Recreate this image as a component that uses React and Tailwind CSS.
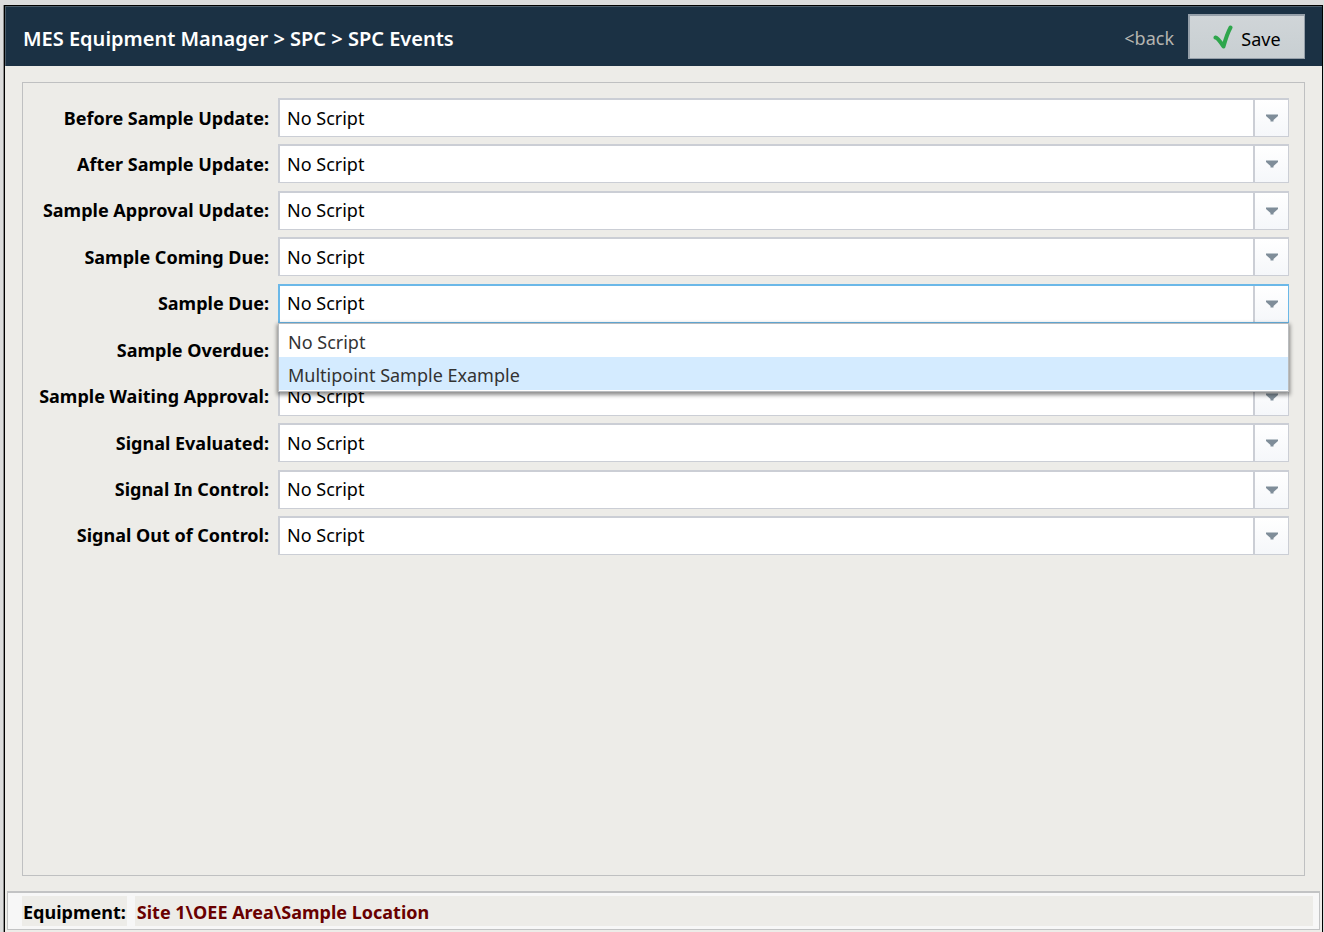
import { useState } from "react";

const events = [
  "Before Sample Update",
  "After Sample Update",
  "Sample Approval Update",
  "Sample Coming Due",
  "Sample Due",
  "Sample Overdue",
  "Sample Waiting Approval",
  "Signal Evaluated",
  "Signal In Control",
  "Signal Out of Control",
];

const scripts = ["No Script", "Multipoint Sample Example"];

// drop-down with its own list, so the native popup is suppressed
function ScriptSelect({ id, value, open, onToggle, onPick }) {
  const [active, setActive] = useState(scripts[1]);

  return (
    <div className="relative h-[39px] min-w-0 flex-1">
      <select
        id={id}
        value={value}
        onMouseDown={(e) => { e.preventDefault(); onToggle() }}
        onChange={(e) => onPick(e.target.value)}
        className={`h-full w-full appearance-none border border-t-2 border-l-2 bg-white pr-10 pl-[7px] text-black outline-none
          ${open ? "border-[#6bb8e8]" : "border-[#cbced5]"}`}
      >
        {scripts.map((s) => <option key={s}>{s}</option>)}
      </select>

      {/* arrow */}
      <div className="pointer-events-none absolute top-[2px] right-px bottom-px flex w-[35px] items-center justify-center border-l-2 border-[#cbced5] bg-linear-to-b from-white to-[#f5f7fa]">
        <svg viewBox="0 0 12 8" className="h-2 w-3" fill="#7f8d99">
          <path d="M0 0.5h12v1.5l-4.5 4v1.5h-3V6L0 2z" />
        </svg>
      </div>

      {open && (
        <ul role="listbox" className="absolute top-[39px] right-0 left-0 z-10 border border-[#b9bcbf] bg-white pb-px text-[#333] shadow-[0_2px_4px_1px_rgba(0,0,0,0.45)]">
          {scripts.map((s) => (
            <li
              key={s}
              role="option"
              aria-selected={s === active}
              onMouseEnter={() => setActive(s)}
              onClick={() => onPick(s)}
              className={`h-[33px] px-[9px] leading-[36px] ${s === active ? "bg-[#d4ebff]" : ""}`}
            >{s}</li>
          ))}
        </ul>
      )}
    </div>
  )
}

function App() {
  const [values, setValues] = useState({});
  const [openRow, setOpenRow] = useState("Sample Due");

  return (
    <div className="flex min-h-screen flex-col bg-[#dcdcdc] pt-[5px] pr-px pl-[3px] font-['Noto_Sans',sans-serif] text-[18px]">
      <div className="flex flex-1 flex-col border-l border-[#8d8d8d]">
        <div className="flex flex-1 flex-col border-t border-r border-l border-black bg-[#edece8]">

          {/* title bar */}
          <header className="flex h-[60px] items-center border-t border-l border-[#4b5c6a] bg-[#1b3144] pr-[17px] pl-[17px]">
            <h1 className="mt-1 text-[20px] font-semibold text-white">MES Equipment Manager &gt; SPC &gt; SPC Events</h1>
            <a href="#" className="mt-1 mr-[14px] ml-auto text-[#b5b5b1]">&lt;back</a>
            <button className="flex h-[45px] w-[117px] items-center justify-center gap-2 border border-t-2 border-l-2 border-[#959fa9] bg-linear-to-b from-[#d0d5d8] to-[#c8cfd2] text-black">
              <svg viewBox="0 0 20 24" className="h-6 w-5" fill="none" stroke="#2ea64c" strokeWidth="4" strokeLinecap="round" strokeLinejoin="round">
                <path d="M2.500 12.500c2.500 0.500 5 4.500 8 9C12 16 14 9 17.500 2.500" />
              </svg>
              <span className="mt-1">Save</span>
            </button>
          </header>

          {/* script per event */}
          <main className="flex flex-1 flex-col px-[17px] pt-4 pb-[15px]">
            <form className="flex-1 border border-[#bfc0c1] px-[15px] pt-[15px] pb-4">
              <div className="flex min-h-[457px] flex-col justify-between">
                {events.map((name) => (
                  <div key={name} className="flex items-center gap-[9px]">
                    <label htmlFor={name} className="mt-px w-[231px] text-right font-bold whitespace-nowrap text-black">{name}:</label>
                    <ScriptSelect
                      id={name}
                      value={values[name] ?? scripts[0]}
                      open={openRow === name}
                      onToggle={() => setOpenRow(openRow === name ? null : name)}
                      onPick={(s) => { setValues({ ...values, [name]: s }); setOpenRow(null) }}
                    />
                  </div>
                ))}
              </div>
            </form>
          </main>

          {/* status bar */}
          <footer className="mr-[2px] mb-[2px] ml-[2px] flex h-[39px] gap-2 border border-t-2 border-[#c2c3c4] bg-[#f7f7f7] py-[3px] pr-[6px] pl-[14px] font-bold">
            <span className="bg-[#edece8] px-px leading-[32px] text-black">Equipment:</span>
            <span className="flex-1 bg-[#edece8] px-[2px] leading-[32px] text-[#690000]">Site 1\OEE Area\Sample Location</span>
          </footer>
        </div>
      </div>
    </div>
  )
}

export default App
